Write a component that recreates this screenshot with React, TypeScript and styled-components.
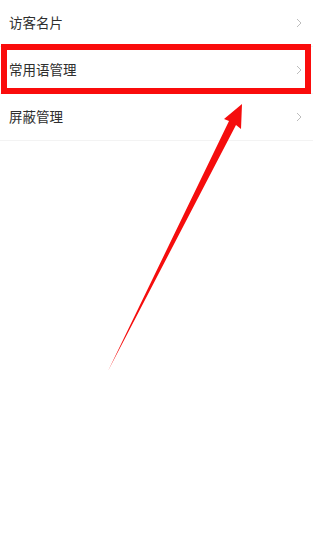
import React from 'react'
import styled, {createGlobalStyle} from 'styled-components'

const GlobalStyle = createGlobalStyle`
  html, body {
    margin: 0;
    padding: 0;
    background: #fff;
  }
  body {
    font-family: "Noto Sans CJK SC", "Noto Sans", sans-serif;
    color: #333;
  }
`

const Page = styled.div`
  position: relative;
  width: 313px;
  height: 540px;
  overflow: hidden;
  background: #fff;
`

const List = styled.div`
  display: flex;
  flex-direction: column;
`

const Row = styled.div<{$highlight?: boolean}>`
  position: relative;
  display: flex;
  align-items: center;
  justify-content: space-between;
  height: 47px;
  padding: 0 11px 0 9px;
  border-bottom: 1px solid #f3f3f3;
  box-sizing: border-box;

  ${({$highlight}) => $highlight && `
    &::after {
      content: '';
      position: absolute;
      left: 1px;
      right: 2px;
      top: -3px;
      bottom: -1px;
      border: 6px solid #fa0c0c;
      box-sizing: border-box;
    }
  `}
`

const Label = styled.span`
  font-size: 13.5px;
  line-height: 1;
  color: #2e2e2e;
`

const Chevron = () => (
  <svg width='6' height='10' viewBox='0 0 6 10'>
    <polyline points='1,1 5,5 1,9' fill='none' stroke='#bdbdbd' strokeWidth='1' />
  </svg>
)

const Pointer = styled.svg`
  position: absolute;
  left: 0;
  top: 0;
  pointer-events: none;
`

const items = [
  {label: '访客名片'},
  {label: '常用语管理', highlight: true},
  {label: '屏蔽管理'},
]

export default function App() {
  return (
    <Page>
      <GlobalStyle />
      <List>
        {items.map((item) => (
          <Row key={item.label} $highlight={item.highlight}>
            <Label>{item.label}</Label>
            <Chevron />
          </Row>
        ))}
      </List>
      <Pointer width='313' height='540' viewBox='0 0 313 540'>
        <polygon
          points='242,104 241,129 236,125 108,371 229,121 224,119'
          fill='#f50d0d'
        />
      </Pointer>
    </Page>
  )
}
